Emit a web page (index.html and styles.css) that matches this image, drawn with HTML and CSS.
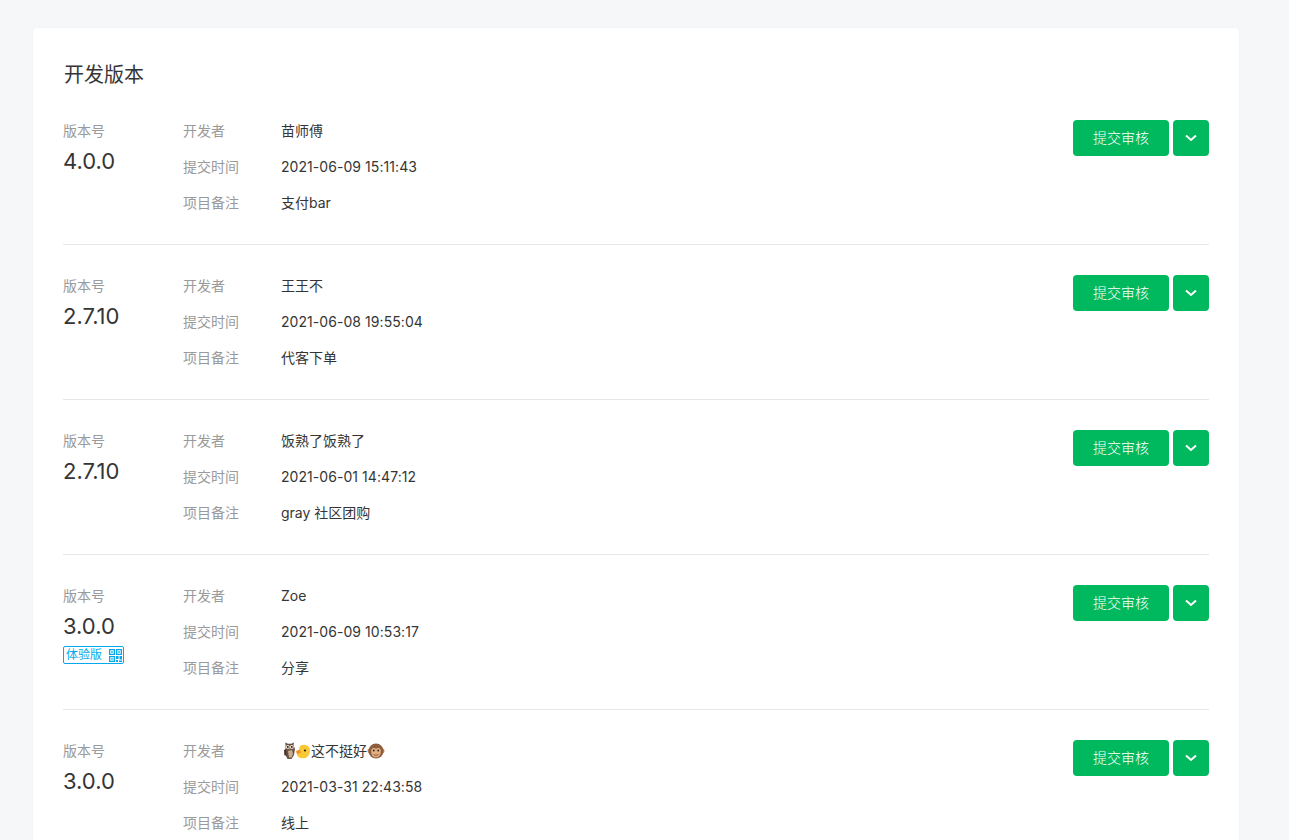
FILE: index.html
```html
<!DOCTYPE html>
<html lang="zh-CN">
<head>
    <meta charset="UTF-8">
    <title>开发版本</title>
    <link rel="stylesheet" href="styles.css">
</head>
<body>
    <div class="page">
        <div class="card">
            <h2 class="card-title">开发版本</h2>

            <div class="version-row">
                <div class="version-col">
                    <div class="label">版本号</div>
                    <div class="version-num">4.0.0</div>
                </div>
                <dl class="info">
                    <dt>开发者</dt><dd>苗师傅</dd>
                    <dt>提交时间</dt><dd class="date">2021-06-09 15:11:43</dd>
                    <dt>项目备注</dt><dd>支付bar</dd>
                </dl>
                <div class="actions">
                    <button class="btn"><span>提交审核</span></button>
                    <button class="btn btn-more"><svg viewBox="0 0 12 8" width="12" height="8"><path d="M1 1.5l5 4.5 5-4.5" fill="none" stroke="#fff" stroke-width="2"/></svg></button>
                </div>
            </div>

            <div class="version-row">
                <div class="version-col">
                    <div class="label">版本号</div>
                    <div class="version-num">2.7.10</div>
                </div>
                <dl class="info">
                    <dt>开发者</dt><dd>王王不</dd>
                    <dt>提交时间</dt><dd class="date">2021-06-08 19:55:04</dd>
                    <dt>项目备注</dt><dd>代客下单</dd>
                </dl>
                <div class="actions">
                    <button class="btn"><span>提交审核</span></button>
                    <button class="btn btn-more"><svg viewBox="0 0 12 8" width="12" height="8"><path d="M1 1.5l5 4.5 5-4.5" fill="none" stroke="#fff" stroke-width="2"/></svg></button>
                </div>
            </div>

            <div class="version-row">
                <div class="version-col">
                    <div class="label">版本号</div>
                    <div class="version-num">2.7.10</div>
                </div>
                <dl class="info">
                    <dt>开发者</dt><dd>饭熟了饭熟了</dd>
                    <dt>提交时间</dt><dd class="date">2021-06-01 14:47:12</dd>
                    <dt>项目备注</dt><dd>gray 社区团购</dd>
                </dl>
                <div class="actions">
                    <button class="btn"><span>提交审核</span></button>
                    <button class="btn btn-more"><svg viewBox="0 0 12 8" width="12" height="8"><path d="M1 1.5l5 4.5 5-4.5" fill="none" stroke="#fff" stroke-width="2"/></svg></button>
                </div>
            </div>

            <div class="version-row">
                <div class="version-col">
                    <div class="label">版本号</div>
                    <div class="version-num">3.0.0</div>
                    <div class="tag">体验版
                        <svg class="tag-qr" viewBox="0 0 13 13" width="13" height="13" fill="#06a7ec">
                            <path d="M0 0h6v6H0zM1.300 1.300v3.400h3.400V1.300zM2.200 2.200h1.600v1.600H2.200z" fill-rule="evenodd"/>
                            <path d="M7 0h6v6H7zM8.300 1.300v3.400h3.400V1.300zM9.200 2.200h1.600v1.600H9.200z" fill-rule="evenodd"/>
                            <path d="M0 7h6v6H0zM1.300 8.300v3.400h3.400V8.300zM2.200 9.200h1.600v1.600H2.200z" fill-rule="evenodd"/>
                            <path d="M7 7h2.500v3H7zM10.500 7H13v3.500h-2.500zM7 11h2v2H7zM10 11.500h3V13h-3z"/>
                        </svg>
                    </div>
                </div>
                <dl class="info">
                    <dt>开发者</dt><dd>Zoe</dd>
                    <dt>提交时间</dt><dd class="date">2021-06-09 10:53:17</dd>
                    <dt>项目备注</dt><dd>分享</dd>
                </dl>
                <div class="actions">
                    <button class="btn"><span>提交审核</span></button>
                    <button class="btn btn-more"><svg viewBox="0 0 12 8" width="12" height="8"><path d="M1 1.5l5 4.5 5-4.5" fill="none" stroke="#fff" stroke-width="2"/></svg></button>
                </div>
            </div>

            <div class="version-row">
                <div class="version-col">
                    <div class="label">版本号</div>
                    <div class="version-num">3.0.0</div>
                </div>
                <dl class="info">
                    <dt>开发者</dt>
                    <dd class="name-emoji">
                        <svg class="emoji emoji-owl" viewBox="0 0 14 18" width="15" height="18">
                            <path d="M3 2.500L2.500 .5 5.500 1.800h3L11.500 .5 11 3 12.500 7 11.500 13 9 17H5L3 13z" fill="#6b5144"/>
                            <path d="M5.500 9l4-1 1 4-1.500 3.500H6.500z" fill="#c9ad93"/>
                            <circle cx="5.300" cy="5" r="2" fill="#e8dccb"/><circle cx="9.300" cy="5" r="2" fill="#e8dccb"/>
                            <circle cx="5.300" cy="5" r=".9" fill="#222"/><circle cx="9.300" cy="5" r=".9" fill="#222"/>
                            <path d="M7.300 6l-.8 1.200h1.600z" fill="#e9a23b"/>
                            <path d="M1.500 8L3.500 7 4 14 1.800 13z" fill="#45332c"/>
                        </svg><svg class="emoji" viewBox="0 0 14 16" width="14" height="16">
                            <path d="M3.500 4C5 .8 11.500 .8 13.500 5 15 9.500 12.500 15 8 15.300 4 15.500 1 13.800 .8 11 2.500 10.500 3 7 3.500 4z" fill="#f9c935"/>
                            <path d="M0 8L3.800 6.500 5 9.800 .8 11z" fill="#f0902a"/>
                            <circle cx="9" cy="7.500" r="1.100" fill="#222"/>
                        </svg><span>这不挺好</span><svg class="emoji" viewBox="0 0 18 16" width="18" height="16">
                            <circle cx="2.800" cy="8" r="2.400" fill="#c98f63"/><circle cx="15.200" cy="8" r="2.400" fill="#c98f63"/>
                            <circle cx="9" cy="8" r="7.500" fill="#8f5d3c"/>
                            <path d="M4.500 6.500C5 4.500 8 4.500 9 6 10 4.500 13 4.500 13.500 6.500 14.500 10 13 14.500 9 14.500 5 14.500 3.500 10 4.500 6.500z" fill="#e2ae82"/>
                            <circle cx="6.800" cy="7.500" r=".9" fill="#222"/><circle cx="11.200" cy="7.500" r=".9" fill="#222"/>
                            <path d="M6.500 11.500c1.500 1 3.500 1 5 0" fill="none" stroke="#6d4328" stroke-width=".8"/>
                        </svg>
                    </dd>
                    <dt>提交时间</dt><dd class="date">2021-03-31 22:43:58</dd>
                    <dt>项目备注</dt><dd>线上</dd>
                </dl>
                <div class="actions">
                    <button class="btn"><span>提交审核</span></button>
                    <button class="btn btn-more"><svg viewBox="0 0 12 8" width="12" height="8"><path d="M1 1.5l5 4.5 5-4.5" fill="none" stroke="#fff" stroke-width="2"/></svg></button>
                </div>
            </div>
        </div>
    </div>
</body>
</html>
```

FILE: styles.css
```css
* {
    box-sizing: border-box;
}

html, body {
    margin: 0;
    height: 100%;
    overflow: hidden;
    background-color: #f6f7f9;
}

body {
    font-family: Inter, "Noto Sans CJK SC", sans-serif;
    font-size: 14px;
    color: #353535;
}

.page {
    padding: 28px 50px 0 33px;
}

.card {
    background-color: #fff;
    border-radius: 4px;
    padding: 0 30px;
    box-shadow: 0 0 2px rgba(0, 0, 0, .06);
}

.card-title {
    margin: 0;
    padding: 33px 0 31px 1px;
    font-size: 20px;
    font-weight: 400;
    line-height: 28px;
    color: #353535;
}

.version-row {
    display: flex;
    padding: 0 0 30px;
    margin-bottom: 30px;
    border-bottom: 1px solid #e7e7eb;
}

.version-col {
    width: 120px;
    flex-shrink: 0;
}

.label {
    line-height: 22px;
    color: #9a9a9a;
}

.version-num {
    margin-top: 4px;
    font-size: 22px;
    line-height: 30px;
}

.tag {
    display: flex;
    align-items: center;
    justify-content: space-between;
    width: 61px;
    height: 18px;
    margin-top: 5px;
    padding: 0 1px 0 2px;
    border: 1px solid #06a7ec;
    border-radius: 2px;
    font-size: 12px;
    line-height: 16px;
    color: #06a7ec;
}

.info {
    flex: 1;
    display: grid;
    grid-template-columns: 98px 1fr;
    row-gap: 14px;
    margin: 0;
    line-height: 22px;
}

.info dt {
    color: #9a9a9a;
}

.info dd {
    margin: 0;
    color: #353535;
}

.info .date {
    letter-spacing: .06px;
}

.name-emoji {
    display: flex;
    align-items: center;
}

.emoji {
    flex-shrink: 0;
}

.emoji-owl {
    margin-left: 1px;
    margin-right: -1px;
}

.name-emoji span {
    margin-left: 1px;
}

.actions {
    display: flex;
    gap: 4px;
}

.btn {
    width: 96px;
    height: 36px;
    padding: 0;
    border: 0;
    border-radius: 4px;
    background-color: #00b95e;
    color: #fff;
    font-family: inherit;
    font-size: 14px;
    font-weight: 300;
}

.btn span {
    display: block;
    margin-top: -2px;
}

.btn-more {
    display: flex;
    align-items: center;
    justify-content: center;
    width: 36px;
}
```
